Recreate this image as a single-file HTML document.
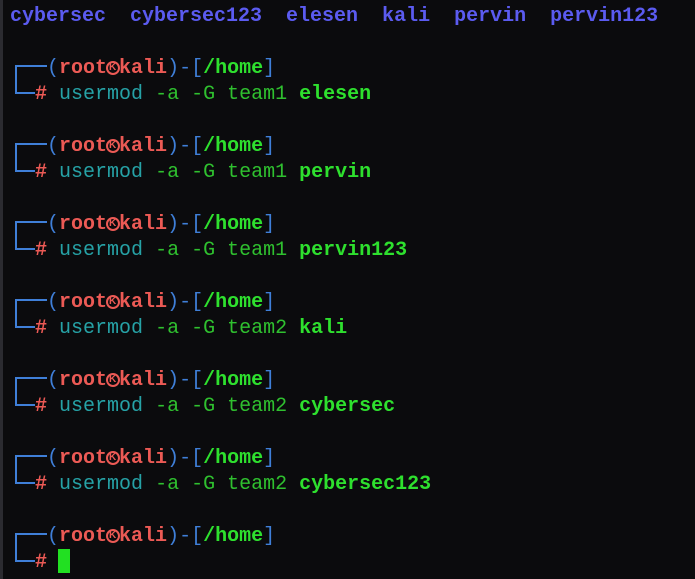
<!DOCTYPE html>
<html><head><meta charset="utf-8"><style>
body{margin:0;width:695px;height:579px;background:#0b0b0d;overflow:hidden;position:relative;font-family:"Liberation Mono","DejaVu Sans Mono",monospace;font-size:20px}
.edge{position:absolute;left:0;top:0;width:3px;height:579px;background:#2b2b30}
.r{position:absolute;left:11px;height:26px;line-height:26px;white-space:pre;margin-top:2px}
.top{left:10px;color:#5b5bf0;font-weight:bold}
.b{color:#3f7fd8}.red{color:#ec5a55;font-weight:bold}.g{color:#2ee02e;font-weight:bold}
.cy{color:#26a2a6}.dg{color:#2fc02f}
.k{display:inline-block;width:12px;height:26px;position:relative;vertical-align:top}
.k:before{content:"";position:absolute;left:-1px;top:5px;width:14px;height:14px;border:2px solid #ec5a55;border-radius:50%;box-sizing:border-box}
.k:after{content:"K";position:absolute;left:2px;top:7px;font-size:10px;line-height:10px;color:#ec5a55;font-weight:bold;font-family:"Liberation Sans",sans-serif}
.f{position:absolute;background:#3f7fd8}
.cur{position:absolute;left:58px;top:549px;width:12px;height:24px;background:#22e022}
</style></head><body>
<div class="edge"></div>
<div class="r top" style="top:2px">cybersec  cybersec123  elesen  kali  pervin  pervin123</div>

<div class="f" style="left:15px;top:65px;width:2px;height:29px"></div><div class="f" style="left:15px;top:65px;width:32px;height:2px"></div><div class="f" style="left:15px;top:92px;width:20px;height:2px"></div>
<div class="r" style="top:54px">   <span class="b">(</span><span class="red">root</span><span class="k"></span><span class="red">kali</span><span class="b">)-[</span><span class="g">/home</span><span class="b">]</span></div>
<div class="r" style="top:80px">  <span class="red">#</span> <span class="cy">usermod</span> <span class="dg">-a -G team1</span> <span class="g">elesen</span></div>

<div class="f" style="left:15px;top:143px;width:2px;height:29px"></div><div class="f" style="left:15px;top:143px;width:32px;height:2px"></div><div class="f" style="left:15px;top:170px;width:20px;height:2px"></div>
<div class="r" style="top:132px">   <span class="b">(</span><span class="red">root</span><span class="k"></span><span class="red">kali</span><span class="b">)-[</span><span class="g">/home</span><span class="b">]</span></div>
<div class="r" style="top:158px">  <span class="red">#</span> <span class="cy">usermod</span> <span class="dg">-a -G team1</span> <span class="g">pervin</span></div>

<div class="f" style="left:15px;top:221px;width:2px;height:29px"></div><div class="f" style="left:15px;top:221px;width:32px;height:2px"></div><div class="f" style="left:15px;top:248px;width:20px;height:2px"></div>
<div class="r" style="top:210px">   <span class="b">(</span><span class="red">root</span><span class="k"></span><span class="red">kali</span><span class="b">)-[</span><span class="g">/home</span><span class="b">]</span></div>
<div class="r" style="top:236px">  <span class="red">#</span> <span class="cy">usermod</span> <span class="dg">-a -G team1</span> <span class="g">pervin123</span></div>

<div class="f" style="left:15px;top:299px;width:2px;height:29px"></div><div class="f" style="left:15px;top:299px;width:32px;height:2px"></div><div class="f" style="left:15px;top:326px;width:20px;height:2px"></div>
<div class="r" style="top:288px">   <span class="b">(</span><span class="red">root</span><span class="k"></span><span class="red">kali</span><span class="b">)-[</span><span class="g">/home</span><span class="b">]</span></div>
<div class="r" style="top:314px">  <span class="red">#</span> <span class="cy">usermod</span> <span class="dg">-a -G team2</span> <span class="g">kali</span></div>

<div class="f" style="left:15px;top:377px;width:2px;height:29px"></div><div class="f" style="left:15px;top:377px;width:32px;height:2px"></div><div class="f" style="left:15px;top:404px;width:20px;height:2px"></div>
<div class="r" style="top:366px">   <span class="b">(</span><span class="red">root</span><span class="k"></span><span class="red">kali</span><span class="b">)-[</span><span class="g">/home</span><span class="b">]</span></div>
<div class="r" style="top:392px">  <span class="red">#</span> <span class="cy">usermod</span> <span class="dg">-a -G team2</span> <span class="g">cybersec</span></div>

<div class="f" style="left:15px;top:455px;width:2px;height:29px"></div><div class="f" style="left:15px;top:455px;width:32px;height:2px"></div><div class="f" style="left:15px;top:482px;width:20px;height:2px"></div>
<div class="r" style="top:444px">   <span class="b">(</span><span class="red">root</span><span class="k"></span><span class="red">kali</span><span class="b">)-[</span><span class="g">/home</span><span class="b">]</span></div>
<div class="r" style="top:470px">  <span class="red">#</span> <span class="cy">usermod</span> <span class="dg">-a -G team2</span> <span class="g">cybersec123</span></div>

<div class="f" style="left:15px;top:533px;width:2px;height:29px"></div><div class="f" style="left:15px;top:533px;width:32px;height:2px"></div><div class="f" style="left:15px;top:560px;width:20px;height:2px"></div>
<div class="r" style="top:522px">   <span class="b">(</span><span class="red">root</span><span class="k"></span><span class="red">kali</span><span class="b">)-[</span><span class="g">/home</span><span class="b">]</span></div>
<div class="r" style="top:548px">  <span class="red">#</span></div>
<div class="cur"></div>
</body></html>
